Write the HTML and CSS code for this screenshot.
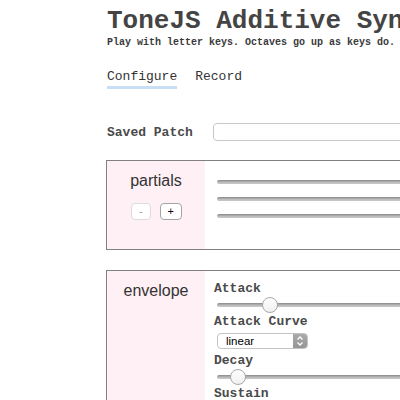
FILE: index.html
```html
<!DOCTYPE html>
<html>
<head>
<meta charset="utf-8">
<title>ToneJS Additive Synth</title>
<link rel="stylesheet" href="styles.css">
</head>
<body>
<div class="page">
  <h1 class="title">ToneJS Additive Synth</h1>
  <p class="subtitle">Play with letter keys. Octaves go up as keys do.</p>
  <nav class="tabs">
    <span class="tab active">Configure</span>
    <span class="tab">Record</span>
  </nav>
  <div class="patch-row">
    <label class="patch-label">Saved Patch</label>
    <input class="patch-input" type="text">
  </div>

  <section class="panel">
    <div class="panel-side partials-side">
      <div class="panel-name">partials</div>
      <div class="btn-row">
        <button class="btn btn-disabled">-</button>
        <button class="btn">+</button>
      </div>
    </div>
    <div class="panel-body partials-body">
      <input class="slider no-thumb" type="range" min="0" max="1" value="1">
      <input class="slider no-thumb" type="range" min="0" max="1" value="1">
      <input class="slider no-thumb" type="range" min="0" max="1" value="1">
    </div>
  </section>

  <section class="panel">
    <div class="panel-side">
      <div class="panel-name">envelope</div>
    </div>
    <div class="panel-body">
      <div class="field-label">Attack</div>
      <input class="slider" type="range" min="0" max="354" step="any" value="45">
      <div class="field-label">Attack Curve</div>
      <div class="select-wrap">
        <span class="select-text">linear</span>
        <span class="select-arrows">
          <svg width="14" height="16" viewBox="0 0 14 16"><path d="M4.5 6.5 L7 4 L9.5 6.5 M4.5 9.5 L7 12 L9.5 9.5" fill="none" stroke="#fff" stroke-width="1.3"/></svg>
        </span>
      </div>
      <div class="field-label">Decay</div>
      <input class="slider" type="range" min="0" max="354" step="any" value="13">
      <div class="field-label">Sustain</div>
      <input class="slider" type="range" min="0" max="354" step="any" value="200">
    </div>
  </section>
</div>
</body>
</html>
```

FILE: styles.css
```css
html, body {
  margin: 0;
  padding: 0;
  background: #fff;
}

.page {
  margin-left: 106px;
  width: 600px;
  font-family: "Liberation Mono", "Courier New", monospace;
  color: #333;
}

.title {
  margin: 0;
  padding-top: 8px;
  font-size: 26px;
  line-height: 26px;
  font-weight: bold;
  color: #444;
  white-space: nowrap;
  padding-left: 1px;
}

.subtitle {
  margin: 4px 0 0 1px;
  font-size: 10px;
  line-height: 10px;
  font-weight: bold;
  color: #3a3a3a;
  white-space: nowrap;
}

.tabs {
  display: flex;
  gap: 18px;
  margin-top: 22px;
  padding-left: 1px;
}

.tab {
  font-size: 13px;
  line-height: 13px;
  padding-bottom: 3px;
  border-bottom: 3px solid transparent;
  color: #333;
}

.tab.active {
  border-bottom-color: #c7def5;
}

.patch-row {
  display: flex;
  align-items: center;
  margin-top: 34px;
  padding-left: 1px;
}

.patch-label {
  font-size: 13px;
  font-weight: bold;
  color: #4a4a4a;
}

.patch-input {
  margin-left: 20px;
  flex: 1;
  height: 18px;
  box-sizing: border-box;
  border: 1px solid #c8c8c8;
  border-radius: 4px;
  padding: 0 4px;
}

.panel {
  display: flex;
  border: 1px solid #808080;
  margin-top: 19px;
}

.panel + .panel {
  margin-top: 20px;
}

.panel-side {
  width: 98px;
  flex: none;
  background: #fff0f5;
  padding-top: 11px;
  text-align: center;
}

.partials-side {
  padding-bottom: 29px;
}

.panel-name {
  font-family: "Liberation Sans", Arial, sans-serif;
  font-size: 16px;
  line-height: 18px;
  color: #333;
}

.btn-row {
  display: flex;
  justify-content: center;
  gap: 9px;
  margin-top: 13px;
  padding-left: 1px;
}

.btn {
  height: 17px;
  padding: 0 7px;
  font-family: "Liberation Sans", Arial, sans-serif;
  font-size: 11px;
  line-height: 15px;
  background: #fff;
  border: 1px solid #a4a4a4;
  border-radius: 4px;
  color: #1a0010;
}

.btn-disabled {
  border-color: #dcdcdc;
  color: #9a9a9a;
}

.panel-body {
  flex: 1;
  padding: 10px 0 0 9px;
  display: flex;
  flex-direction: column;
  align-items: flex-start;
}

.partials-body {
  padding-top: 12px;
}

.field-label {
  font-size: 13px;
  line-height: 15px;
  font-weight: bold;
  color: #4a4a4a;
}

.slider {
  -webkit-appearance: none;
  appearance: none;
  width: 370px;
  height: 18px;
  margin: 0 0 0 3px;
  padding: 0;
  background: transparent;
}

.partials-body .slider {
  height: 17px;
}

.slider::-webkit-slider-runnable-track {
  height: 4px;
  border-radius: 2px;
  background: linear-gradient(#888, #bdbdbd 60%, #c8c8c8);
  border: none;
}

.slider::-webkit-slider-thumb {
  -webkit-appearance: none;
  appearance: none;
  width: 16px;
  height: 16px;
  margin-top: -6px;
  border-radius: 50%;
  border: 1px solid #a8a8a8;
  background: linear-gradient(#fff, #f0f0f0);
  box-sizing: border-box;
}

.no-thumb::-webkit-slider-thumb {
  opacity: 0;
}

.select-wrap {
  display: flex;
  margin: 4px 0 4px 3px;
  width: 91px;
  height: 16px;
  box-sizing: border-box;
  border: 1px solid #c4c4c4;
  border-radius: 4px;
  overflow: hidden;
  background: #fff;
}

.select-text {
  flex: 1;
  font-family: "Liberation Sans", Arial, sans-serif;
  font-size: 11.5px;
  line-height: 14px;
  padding-left: 8px;
  color: #000;
}

.select-arrows {
  width: 14px;
  display: flex;
  align-items: center;
  justify-content: center;
  background: linear-gradient(#aaa, #959595);
}

.select-arrows svg {
  display: block;
}
```
